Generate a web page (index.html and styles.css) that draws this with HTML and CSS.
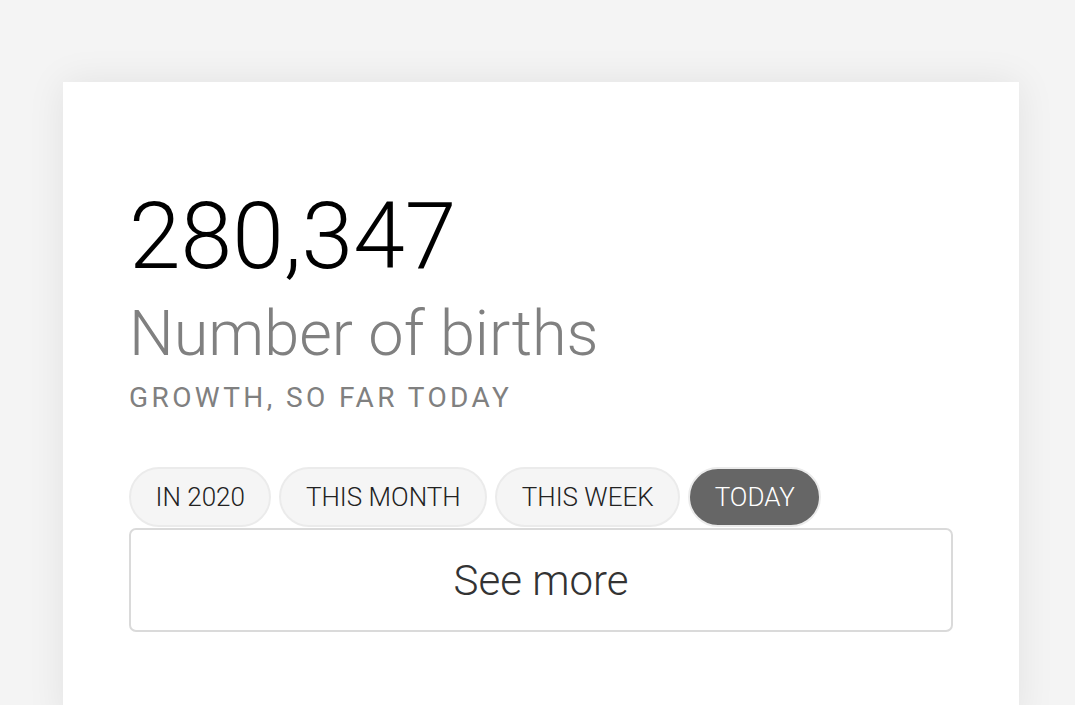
FILE: index.html
```html
<!DOCTYPE html>
<html lang="en">
<head>
    <meta charset="UTF-8">
    <meta name="viewport" content="width=device-width, initial-scale=1.0">
    <title>Number of births</title>
    <link rel="stylesheet" href="styles.css">
</head>
<body>
    <div class="card">
        <div class="counter">280,347</div>
        <div class="title">Number of births</div>
        <div class="subtitle">GROWTH, SO FAR TODAY</div>

        <div class="periods">
            <button class="pill">IN 2020</button>
            <button class="pill">THIS MONTH</button>
            <button class="pill">THIS WEEK</button>
            <button class="pill active">TODAY</button>
        </div>

        <button class="see-more">See more</button>
    </div>
</body>
</html>
```

FILE: styles.css
```css
body {
    margin: 0;
    background-color: #f4f4f4;
    font-family: Roboto, 'Noto Sans', sans-serif;
    color: #000;
}
.card {
    width: 956px;
    margin: 82px 0 0 63px;
    padding: 108px 66px 90px 66px;
    box-sizing: border-box;
    background: #ffffff;
    box-shadow: 0 0 36px rgba(0, 0, 0, 0.08);
}
.counter {
    font-size: 93px;
    font-weight: 300;
    line-height: 1;
}
.title {
    margin-top: 19px;
    font-size: 63px;
    font-weight: 300;
    line-height: 1;
    color: #808080;
}
.subtitle {
    margin-top: 19px;
    font-size: 28px;
    font-weight: 400;
    line-height: 1;
    letter-spacing: 3.4px;
    color: #808080;
}
.periods {
    display: flex;
    gap: 8px;
    margin-top: 55px;
}
.pill {
    height: 60px;
    padding: 0 24.5px;
    border: 2px solid #ebebeb;
    border-radius: 30px;
    background-color: #f5f5f5;
    font-family: inherit;
    font-size: 26px;
    font-weight: 300;
    color: #222;
}
.pill.active {
    background-color: #666666;
    color: #ffffff;
}
.see-more {
    display: block;
    width: 100%;
    height: 104px;
    margin-top: 1px;
    border: 2px solid #dadada;
    border-radius: 7px;
    background: #ffffff;
    font-family: inherit;
    font-size: 42px;
    font-weight: 300;
    color: #333;
}
```
